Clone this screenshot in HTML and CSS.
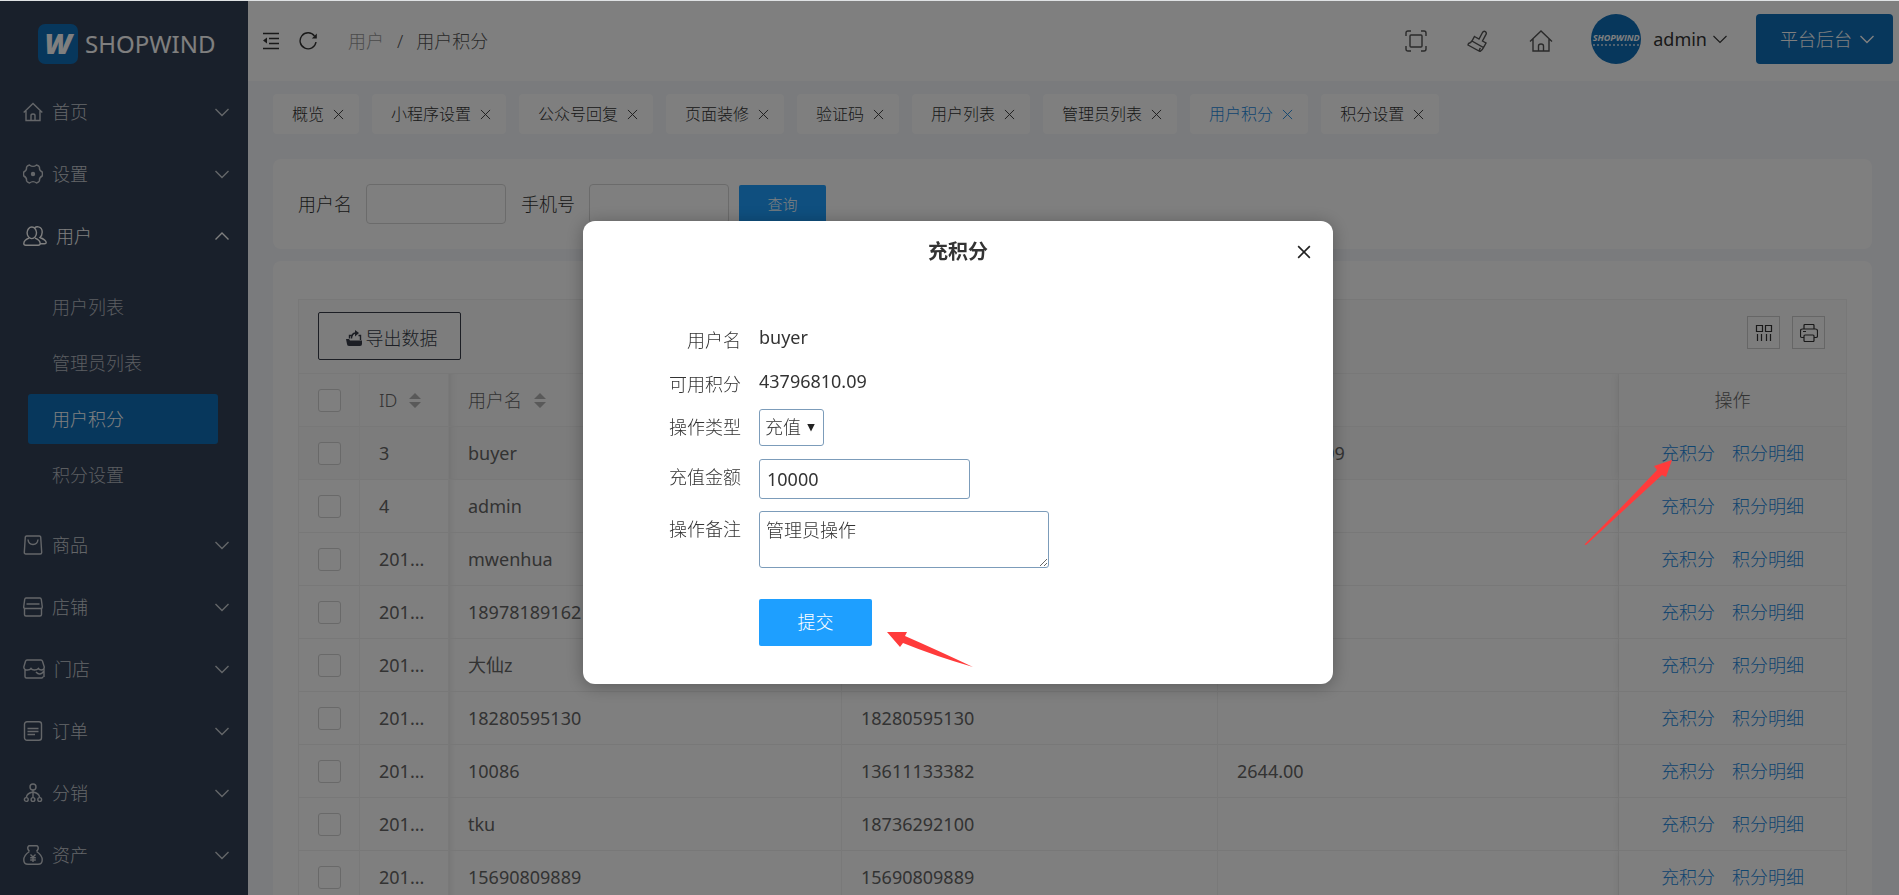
FILE: index.html
```html
<!DOCTYPE html>
<html lang="zh-CN">
<head>
<meta charset="utf-8">
<title>用户积分 - SHOPWIND</title>
<link rel="stylesheet" href="styles.css">
</head>
<body>
<svg class="sprite" aria-hidden="true">
  <symbol id="down" viewBox="0 0 14 14"><path d="M.5 4 7 10.500 13.500 4"/></symbol>
  <symbol id="up" viewBox="0 0 14 14"><path d="M.5 10.500 7 4l6.500 6.500"/></symbol>
  <symbol id="cross" viewBox="0 0 12 12"><path d="M1 1l10 10M11 1 1 11"/></symbol>
  <symbol id="home" viewBox="0 0 24 24"><path d="M1 12.500 12 2l11 10.500M4 10v12h16V10M9.500 22v-5q0-2 2.500-2t2.500 2v5"/></symbol>
  <symbol id="sort" viewBox="0 0 12 16"><path d="M6 0l6 6H0zM0 9h12l-6 6z"/></symbol>
</svg>
<div class="app">
  <aside class="sidebar">
    <a class="logo" href="#"><span class="logo-mark">W</span><span class="logo-text">SHOPWIND</span></a>
    <nav class="menu">
      <a class="item" href="#"><svg class="ico" viewBox="0 0 20 20"><path d="M.7 10.500 10 1.500l9.300 9M3 9v9.500h14V9M8 18.500v-5q0-1.500 2-1.500t2 1.500v5"/></svg><span>首页</span><svg class="chev"><use href="#down"/></svg></a>
      <a class="item" href="#"><svg class="ico" viewBox="0 0 20 20"><path d="M6.500 1Q10 3.800 13.500 1q2.500.8 3 2.200-.5 3.300 2.700 4.800.5 2 0 4-3.200 1.500-2.700 4.800-.5 1.400-3 2.200-3.500-2.800-7 0-2.500-.8-3-2.200.5-3.300-2.700-4.800-.5-2 0-4Q4 6.500 3.500 3.200 4 1.800 6.500 1z"/><circle cx="10" cy="10" r="1.500" fill="currentColor"/></svg><span>设置</span><svg class="chev"><use href="#down"/></svg></a>
      <a class="item open" href="#"><svg class="ico wide" viewBox="0 0 24 20"><ellipse cx="8.800" cy="6.800" rx="4.700" ry="5.800"/><path d="M6 12.200Q1 14 .8 17.500q0 1.700 2 1.700h12.400q2 0 2-1.700-.2-3.500-5.200-5.300M11.500 1.800q2-1.500 4-.9 3.800 1 3.700 5.300-.1 3.400-2.200 5.300 6 2.500 6.200 5 0 1.200-1.700 1.200h-4"/></svg><span>用户</span><svg class="chev"><use href="#up"/></svg></a>
      <div class="submenu">
        <a href="#">用户列表</a>
        <a href="#">管理员列表</a>
        <a class="current" href="#">用户积分</a>
        <a href="#">积分设置</a>
      </div>
      <a class="item" href="#"><svg class="ico" viewBox="0 0 20 20"><path d="M3.500 1h13q1 0 1.200 1l1 15.500q0 1.500-1.500 1.500H2.800q-1.500 0-1.500-1.500l1-15.500Q2.500 1 3.500 1zM5 4.500q.6 5 5 5t5-5"/></svg><span>商品</span><svg class="chev"><use href="#down"/></svg></a>
      <a class="item" href="#"><svg class="ico" viewBox="0 0 20 20"><path d="M3 1h14q1 0 1.300 1.300L19.300 10q0 1.500-1.300 1.500H2Q.7 11.500.7 10l1-7.700Q2 1 3 1zM3.500 7h13M1.500 11.500v6Q1.500 19 3 19h14q1.500 0 1.500-1.500v-6"/></svg><span>店铺</span><svg class="chev"><use href="#down"/></svg></a>
      <a class="item" href="#"><svg class="ico mid" viewBox="0 0 22 20"><path d="M4 1h14q1 0 1.500 1.200L21.300 8q0 3-3 3-2 0-2.800-1.500Q14 11 11.500 11T8 9.500Q7 11 4.500 11 .8 11 .8 8l1.700-5.800Q3 1 4 1zM2 11v6.500Q2 19 3.500 19h15q1.500 0 1.500-1.500M13 13q4 4.500 8-1v6"/></svg><span>门店</span><svg class="chev"><use href="#down"/></svg></a>
      <a class="item" href="#"><svg class="ico" viewBox="0 0 20 20"><rect x="1.500" y=".8" width="17" height="18.500" rx="2.500"/><path d="M4.500 7.500h11M4.500 10.500h11M4.500 13.500H12"/></svg><span>订单</span><svg class="chev"><use href="#down"/></svg></a>
      <a class="item" href="#"><svg class="ico" viewBox="0 0 20 20"><circle cx="10" cy="4" r="3"/><circle cx="3.300" cy="16.500" r="1.900"/><circle cx="10" cy="16.500" r="1.900"/><circle cx="16.700" cy="16.500" r="1.900"/><path d="M10 7v7.500M3.300 14.500Q4 10 10 9q6 1 6.700 5.500"/></svg><span>分销</span><svg class="chev"><use href="#down"/></svg></a>
      <a class="item" href="#"><svg class="ico" viewBox="0 0 20 20"><path d="M6.500 6.500Q4 4 5 1.800 5.500.8 6.500.8h7q1 0 1.500 1 1 2.200-1.500 4.700M6.500 6.500Q.8 10 .8 15q0 4.300 4.200 4.300h10q4.200 0 4.200-4.300 0-5-5.700-8.500M7.500 9.500 10 12l2.500-2.500M10 12v5M7.200 12.700h5.600M7.200 15h5.600"/></svg><span>资产</span><svg class="chev"><use href="#down"/></svg></a>
    </nav>
  </aside>

  <div class="main">
    <header class="topbar">
      <button class="icon-btn" aria-label="收起菜单"><svg width="18" height="18" viewBox="0 0 18 18"><path d="M1 1.500h16M7 6.500h10M7 11.500h10M1 16.500h16"/><path d="M5 5.500v6L1 8.500z" fill="currentColor" stroke="none"/></svg></button>
      <button class="icon-btn" aria-label="刷新"><svg width="18" height="18" viewBox="0 0 18 18"><path d="M15.500 4A8 8 0 1 0 17 10"/><path d="M17.800 1.500v5h-5z" fill="currentColor" stroke="none"/></svg></button>
      <div class="crumbs"><a href="#">用户</a><span>/</span><span>用户积分</span></div>
      <div class="tools">
        <button class="icon-btn tool" aria-label="全屏"><svg width="22" height="22" viewBox="0 0 22 22"><path d="M1 6V3q0-2 2-2h3M16 1h3q2 0 2 2v3M21 16v3q0 2-2 2h-3M6 21H3q-2 0-2-2v-3"/><rect x="5" y="5" width="12" height="12" rx="1"/></svg></button>
        <button class="icon-btn tool" aria-label="清理缓存"><svg width="22" height="22" viewBox="0 0 22 22"><path d="M7.500 6.500 12 9l3.500-6.500q1.200-1.800 2.800-.9 1.600 1 .7 2.800L15.500 11l3.500 2-2.500 4.500L5 11zM5 11q-1.500 2-3.500 2.500L1 15l12 6.500q2.500-1.500 3.500-4M12.500 21q-.5-1.500 1-3"/></svg></button>
        <button class="icon-btn tool" aria-label="首页"><svg width="24" height="24"><use href="#home"/></svg></button>
      </div>
      <button class="account"><span class="avatar"><b>SHOPWIND</b><i></i></span>admin<svg class="chev"><use href="#down"/></svg></button>
      <button class="platform">平台后台<svg class="chev"><use href="#down"/></svg></button>
    </header>

    <div class="content">
      <nav class="tabs">
        <a href="#">概览<svg><use href="#cross"/></svg></a>
        <a href="#">小程序设置<svg><use href="#cross"/></svg></a>
        <a href="#">公众号回复<svg><use href="#cross"/></svg></a>
        <a href="#">页面装修<svg><use href="#cross"/></svg></a>
        <a href="#">验证码<svg><use href="#cross"/></svg></a>
        <a href="#">用户列表<svg><use href="#cross"/></svg></a>
        <a href="#">管理员列表<svg><use href="#cross"/></svg></a>
        <a class="current" href="#">用户积分<svg><use href="#cross"/></svg></a>
        <a href="#">积分设置<svg><use href="#cross"/></svg></a>
      </nav>

      <form class="card search">
        <label for="s-name">用户名</label><input id="s-name" type="text">
        <label for="s-phone">手机号</label><input id="s-phone" type="text">
        <button type="button">查询</button>
      </form>

      <section class="card list">
        <div class="grid">
          <div class="grid-tools">
            <button class="export"><svg width="16" height="16" viewBox="0 0 16 16"><path d="M0 9h3l1 1.500h12V14q0 2-2 2H3q-2 0-2-2z" fill="currentColor"/><path d="M3.500 8.500V5.500H7M12.500 5.500h2v4.500M5.500 8.500q0-5 4-5.500" fill="none" stroke="currentColor" stroke-width="1.400"/><path d="M9 0l4 3-4 3.500z" fill="currentColor"/></svg>导出数据</button>
            <div class="grid-icons">
              <button aria-label="筛选列"><svg width="18" height="18" viewBox="0 0 18 18"><path d="M1.500 1.500h6v6h-6zM10.500 1.500h6v6h-6zM2.500 10v7M6.500 10v7M11.500 10v7M15.500 10v7"/></svg></button>
              <button aria-label="打印"><svg width="18" height="18" viewBox="0 0 18 18"><path d="M4 5V1.500q0-1 1-1h8q1 0 1 1V5M4 13.500H2q-1.500 0-1.500-1.500V7Q.5 5 2.500 5h13q2 0 2 2v5q0 1.500-1.500 1.500h-2M5 11h8q1 0 1 1v4.500q0 1-1 1H5q-1 0-1-1V12q0-1 1-1zM3 7.500h3"/></svg></button>
            </div>
          </div>
          <table>
            <colgroup><col class="c-check"><col class="c-id"><col class="c-name"><col class="c-phone"><col><col class="c-ops"></colgroup>
            <thead><tr><th><input type="checkbox" aria-label="全选"></th><th>ID<svg class="sort"><use href="#sort"/></svg></th><th class="after-fixed">用户名<svg class="sort"><use href="#sort"/></svg></th><th>手机号</th><th>可用积分</th><th class="ops">操作</th></tr></thead>
            <tbody>
              <tr class="hover"><td><input type="checkbox" aria-label="选择"></td><td>3</td><td class="after-fixed">buyer</td><td></td><td>43796810.09</td><td class="ops"><a href="#">充积分</a><a href="#">积分明细</a></td></tr>
              <tr><td><input type="checkbox" aria-label="选择"></td><td>4</td><td class="after-fixed">admin</td><td></td><td></td><td class="ops"><a href="#">充积分</a><a href="#">积分明细</a></td></tr>
              <tr><td><input type="checkbox" aria-label="选择"></td><td>201...</td><td class="after-fixed">mwenhua</td><td></td><td></td><td class="ops"><a href="#">充积分</a><a href="#">积分明细</a></td></tr>
              <tr><td><input type="checkbox" aria-label="选择"></td><td>201...</td><td class="after-fixed">18978189162</td><td></td><td></td><td class="ops"><a href="#">充积分</a><a href="#">积分明细</a></td></tr>
              <tr><td><input type="checkbox" aria-label="选择"></td><td>201...</td><td class="after-fixed">大仙z</td><td></td><td></td><td class="ops"><a href="#">充积分</a><a href="#">积分明细</a></td></tr>
              <tr><td><input type="checkbox" aria-label="选择"></td><td>201...</td><td class="after-fixed">18280595130</td><td>18280595130</td><td></td><td class="ops"><a href="#">充积分</a><a href="#">积分明细</a></td></tr>
              <tr><td><input type="checkbox" aria-label="选择"></td><td>201...</td><td class="after-fixed">10086</td><td>13611133382</td><td>2644.00</td><td class="ops"><a href="#">充积分</a><a href="#">积分明细</a></td></tr>
              <tr><td><input type="checkbox" aria-label="选择"></td><td>201...</td><td class="after-fixed">tku</td><td>18736292100</td><td></td><td class="ops"><a href="#">充积分</a><a href="#">积分明细</a></td></tr>
              <tr><td><input type="checkbox" aria-label="选择"></td><td>201...</td><td class="after-fixed">15690809889</td><td>15690809889</td><td></td><td class="ops"><a href="#">充积分</a><a href="#">积分明细</a></td></tr>
            </tbody>
          </table>
        </div>
      </section>
    </div>
  </div>
</div>

<div class="mask">
  <svg class="pointer-row" width="90" height="88" viewBox="0 0 90 88"><path d="M89 2 71 8l3 4Q42 46 2 86q-1 1 1 1Q40 53 79 17l4 2z"/></svg>
  <form class="dialog" role="dialog" aria-labelledby="dlg-title">
    <header><h2 id="dlg-title">充积分</h2><button class="close" type="button" aria-label="关闭"><svg width="14" height="14"><use href="#cross"/></svg></button></header>
    <div class="fields">
      <span class="lab">用户名</span><span class="val">buyer</span>
      <span class="lab">可用积分</span><span class="val">43796810.09</span>
      <label class="lab" for="f-type">操作类型</label><span class="pick"><select id="f-type"><option>充值</option></select></span>
      <label class="lab" for="f-sum">充值金额</label><input id="f-sum" type="text" value="10000">
      <label class="lab" for="f-note">操作备注</label><textarea id="f-note">管理员操作</textarea>
      <div class="actions"><button class="submit" type="button">提交</button><svg class="pointer-submit" width="86" height="38" viewBox="0 0 86 38"><path d="M0 2h20l-2 4Q50 20 86 37 48 26 16 13l-3 4z"/></svg></div>
    </div>
  </form>
</div>
</body>
</html>
```
FILE: styles.css
```css
* { box-sizing: border-box; }
html, body { height: 100%; }
body {
  margin: 0;
  overflow: hidden;
  font-family: "Noto Sans", "Noto Sans CJK SC", sans-serif;
  font-size: 18px;
  font-weight: 300;
  line-height: 24px;
  color: #333;
  background: #f4f6fa;
}
a { color: inherit; text-decoration: none; }
button, input, select, textarea { font: inherit; color: inherit; }
button { padding: 0; border: 0; background: none; }
svg { flex: none; fill: none; stroke: currentColor; stroke-width: 1.4; }
.sprite { display: none; }
.chev { width: 14px; height: 14px; }

.app {
  display: flex;
  height: 100vh;
  overflow: hidden;
  border-top: 1px solid #dfe2e4;
}

/* sidebar */
.sidebar { flex: none; width: 248px; background: #334156; color: #c8ccd2; }
.logo { display: flex; align-items: center; gap: 7px; padding: 23px 0 17px 38px; }
.logo-mark {
  width: 40px;
  height: 40px;
  border-radius: 7px;
  background: #0e6eb8;
  color: #fff;
  font: italic 800 29px/38px "Open Sans", sans-serif;
  text-align: center;
}
.logo-text { font-size: 24px; line-height: 40px; font-weight: 400; color: #fff; }
.item { display: flex; align-items: center; gap: 9px; height: 62px; padding: 0 19px 0 23px; }
.item .chev { margin-left: auto; }
.item.open { color: #fff; }
.ico { width: 20px; height: 20px; }
.ico.wide { width: 24px; }
.ico.mid { width: 22px; }
.submenu { display: grid; gap: 6px; padding: 15px 30px 14px 28px; }
.submenu a { height: 50px; padding-left: 24px; border-radius: 3px; line-height: 50px; color: #b6bac1; }
.submenu .current { background: #0e6eb8; color: #fff; }

/* top bar */
.main { flex: 1; min-width: 0; }
.topbar { display: flex; align-items: center; height: 80px; padding: 0 6px 0 14px; background: #fff; }
.icon-btn { display: flex; margin-right: 19px; color: #333; }
.crumbs { display: flex; gap: 13px; padding-left: 12px; color: #555; }
.crumbs a { color: #999; }
.tools { display: flex; gap: 40px; align-items: center; margin-left: auto; }
.icon-btn.tool { margin: 0; color: #555; }
.account, .platform { display: flex; align-self: flex-start; align-items: center; height: 50px; margin-top: 13px; }
.account { gap: 6px; margin-left: 38px; margin-right: 29px; font-weight: 400; }
.account .chev { stroke-width: 1.1; }
.avatar {
  display: flex;
  flex-direction: column;
  align-items: center;
  justify-content: center;
  width: 50px;
  height: 50px;
  margin-right: 6px;
  border-radius: 50%;
  background: #0e6eb8;
  color: #fff;
  overflow: hidden;
}
.avatar b { font: italic 700 9px/12px "Open Sans", sans-serif; }
.avatar i { width: 46px; border-top: 2px dotted #9cc3e0; }
.platform { gap: 8px; padding: 0 19px 0 24px; border-radius: 4px; background: #0e6eb8; color: #fff; }

/* page content */
.content { padding: 13px 27px 0 25px; }
.tabs { display: flex; gap: 13px; margin-bottom: 25px; font-size: 16px; }
.tabs a {
  display: flex;
  align-items: center;
  gap: 9px;
  height: 40px;
  padding: 0 15px 0 19px;
  border-radius: 4px;
  background: #fff;
}
.tabs svg { width: 11px; height: 11px; stroke-width: 1; }
.tabs .current { color: #1e8ae0; }
.card { border-radius: 8px; background: #fff; }
.search { display: flex; align-items: center; height: 90px; padding-left: 25px; }
.search input {
  width: 140px;
  height: 40px;
  margin: 0 15px 0 14px;
  border: 1px solid #d6d6d6;
  border-radius: 4px;
  background: #fff;
}
.search #s-phone { margin-right: 10px; }
.search button {
  width: 87px;
  height: 38px;
  border-radius: 2px;
  background: #1e9fff;
  color: #fff;
  font-size: 15px;
}
.list { margin-top: 12px; padding: 38px 25px; }
.grid { border: 1px solid #f0f0f0; }
.grid-tools {
  display: flex;
  align-items: flex-start;
  justify-content: space-between;
  height: 74px;
  padding: 12px 21px 0 19px;
  border-bottom: 1px solid #f0f0f0;
  background: #fafafa;
}
.export {
  display: flex;
  align-items: center;
  justify-content: center;
  gap: 4px;
  width: 143px;
  height: 48px;
  padding: 3px 0 0 4px;
  border: 1px solid #393d49;
  border-radius: 2px;
  color: #393d49;
}
.export svg { stroke: none; }
.grid-icons { display: flex; gap: 12px; padding-top: 4px; }
.grid-icons button {
  display: flex;
  align-items: center;
  justify-content: center;
  width: 33px;
  height: 33px;
  border: 1px solid #ccc;
}
.grid-icons svg { stroke-width: 1.2; }
table { width: 100%; border-collapse: separate; border-spacing: 0; table-layout: fixed; color: #666; }
.c-check { width: 61px; }
.c-id { width: 89px; }
.c-name { width: 393px; }
.c-phone { width: 376px; }
.c-ops { width: 227px; }
th, td {
  height: 53px;
  padding: 0 0 0 19px;
  border-right: 1px solid #f3f3f3;
  border-bottom: 1px solid #f0f0f0;
  font-weight: 300;
  text-align: left;
  white-space: nowrap;
}
td { font-weight: 400; }
th { background: #fafafa; }
tr.hover td { background: #f8f8f8; }
th:last-child, td:last-child { border-right: 0; }
.after-fixed { box-shadow: inset 8px 0 8px -8px rgba(0, 0, 0, .12); }
.ops {
  padding: 0;
  text-align: center;
  box-shadow: -1px 0 8px rgba(0, 0, 0, .08);
  clip-path: inset(0 0 0 -8px);
}
td.ops { font-weight: 300; color: #1e8ae0; }
.ops a + a { margin-left: 17px; }
.sort { width: 12px; height: 16px; margin-left: 12px; fill: #b2b2b2; stroke: none; vertical-align: -2px; }
input[type="checkbox"] {
  display: block;
  width: 23px;
  height: 23px;
  margin: 0;
  appearance: none;
  border: 1px solid #d2d2d2;
  border-radius: 3px;
  background: #fff;
}

/* dialog */
.mask {
  position: fixed;
  inset: 1px 0 0 0;
  display: flex;
  align-items: center;
  justify-content: center;
  padding-top: 8px;
  padding-left: 17px;
  background: rgba(0, 0, 0, .5);
}
.pointer-row { position: absolute; top: 457px; right: 226px; fill: #ff3b3b; stroke: none; }
.dialog {
  width: 750px;
  padding-bottom: 38px;
  border-radius: 12px;
  background: #fff;
  box-shadow: 0 2px 18px rgba(0, 0, 0, .3);
}
.dialog header { display: flex; align-items: center; height: 62px; margin-bottom: 39px; padding: 0 22px 0 36px; }
.dialog h2 { flex: 1; margin: 0; font-size: 20px; line-height: 28px; font-weight: 700; text-align: center; }
.close { display: flex; color: #222; }
.fields {
  display: grid;
  grid-template-columns: 158px 1fr;
  grid-template-rows: 44px 43px 50px 52px 57px auto;
  column-gap: 18px;
  justify-items: start;
}
.lab { justify-self: end; padding-top: 6px; }
.val { padding-top: 3px; font-weight: 400; }
.pick { position: relative; }
.pick::after {
  content: "";
  position: absolute;
  top: 15px;
  right: 9px;
  width: 8px;
  height: 8px;
  background: #222;
  clip-path: polygon(0 0, 100% 0, 50% 100%);
  pointer-events: none;
}
.fields select, .fields input, .fields textarea {
  display: block;
  margin: 0;
  border: 1px solid #7c9cba;
  border-radius: 3px;
  background: #fff;
}
.fields select { width: 65px; height: 37px; padding: 0 5px; appearance: none; }
.fields input { width: 211px; height: 40px; padding: 0 7px; font-weight: 400; }
.fields textarea { width: 290px; height: 57px; padding: 5px 6px; line-height: 26px; }
.actions { position: relative; grid-column: 2; padding-top: 31px; }
.submit { display: block; width: 113px; height: 47px; border-radius: 2px; background: #1e9fff; color: #fff; }
.pointer-submit { position: absolute; top: 62px; left: 128px; fill: #ff3b3b; stroke: none; }
```
